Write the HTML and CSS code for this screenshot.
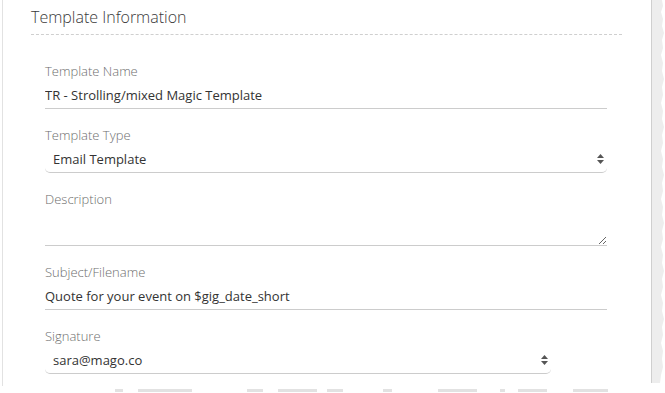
FILE: index.html
```
<!DOCTYPE html>
<html lang="en">
<head>
  <meta charset="UTF-8">
  <title>Template Information</title>
  <link rel="stylesheet" href="styles.css">
</head>
<body>
  <div class="page">
    <div class="panel">
      <h3 class="panel-title">Template Information</h3>

      <form class="fields">
        <div class="form-group">
          <label for="name">Template Name</label>
          <input type="text" id="name" value="TR - Strolling/mixed Magic Template">
        </div>

        <div class="form-group">
          <label for="type">Template Type</label>
          <div class="select-wrap">
            <select id="type">
              <option>Email Template</option>
            </select>
          </div>
        </div>

        <div class="form-group">
          <label for="description">Description</label>
          <textarea id="description"></textarea>
        </div>

        <div class="form-group">
          <label for="subject">Subject/Filename</label>
          <input type="text" id="subject" value="Quote for your event on $gig_date_short">
        </div>

        <div class="form-group">
          <label for="signature">Signature</label>
          <div class="select-wrap short">
            <select id="signature">
              <option>sara@mago.co</option>
            </select>
          </div>
        </div>
      </form>
    </div>

    <div class="edge">
      <svg width="14" height="386" viewBox="0 0 14 386">
        <polygon fill="#ededed" points="0,0 11,0 12,6 10,12 12,19 11,26 13,33 11,40 12,48 10,55 12,63 11,71 13,79 11,87 12,95 10,103 12,111 11,119 13,127 11,135 12,143 10,151 12,159 11,167 13,175 11,183 12,191 10,199 12,207 11,215 13,223 11,231 12,239 10,247 12,255 11,263 13,271 11,279 12,287 10,295 12,303 11,311 13,319 11,327 12,335 10,343 12,351 11,359 12,367 10,375 9,383 0,383"/>
        <line x1="0.5" y1="0" x2="0.5" y2="383" stroke="#cfcfcf" stroke-width="1"/>
      </svg>
    </div>
  </div>

  <div class="next-row">
    <span style="margin-left: 115px; width: 8px"></span>
    <span style="margin-left: 15px; width: 54px"></span>
    <span style="margin-left: 55px; width: 16px"></span>
    <span style="margin-left: 15px; width: 39px"></span>
    <span style="margin-left: 10px; width: 16px"></span>
    <span style="margin-left: 40px; width: 9px"></span>
    <span style="margin-left: 46px; width: 2px"></span>
    <span style="margin-left: 0; width: 37px"></span>
    <span style="margin-left: 23px; width: 5px"></span>
    <span style="margin-left: 13px; width: 29px"></span>
    <span style="margin-left: 26px; width: 35px"></span>
  </div>
</body>
</html>
```

FILE: styles.css
```
body {
  margin: 0;
  padding: 0;
  background: #fff;
  font-family: "Open Sans", Arial, sans-serif;
  color: #333;
}

.page {
  display: flex;
  height: 386px;
  padding-left: 2px;
}

.panel {
  flex: 1;
  border-left: 1px solid #e2e2e2;
  padding: 0 29px 0 28px;
}

.panel-title {
  margin: 0;
  padding: 7px 0 7px;
  font-size: 16px;
  line-height: 20px;
  font-weight: 300;
  color: #3a3a3a;
  border-bottom: 1px dashed #cfcfcf;
}

.fields {
  padding: 26px 15px 0 14px;
}

.form-group {
  margin-bottom: 16px;
}

label {
  display: block;
  font-size: 13px;
  line-height: 20px;
  font-weight: 300;
  color: #6e6e6e;
}

input[type="text"], textarea, select {
  display: block;
  width: 100%;
  box-sizing: border-box;
  border: none;
  border-bottom: 1px solid #cccccc;
  background: transparent;
  font-family: "Open Sans", Arial, sans-serif;
  font-size: 13px;
  color: #333;
  outline: none;
}

input[type="text"] {
  height: 28px;
  line-height: 27px;
  padding: 0;
}

textarea {
  height: 37px;
  padding: 0;
  resize: vertical;
}

.select-wrap {
  position: relative;
}

.select-wrap.short {
  width: 506px;
}

select {
  appearance: none;
  -webkit-appearance: none;
  height: 28px;
  padding: 0 20px 0 8px;
  border-radius: 0 0 5px 5px;
}

/* up/down arrows */
.select-wrap::after {
  content: "";
  position: absolute;
  right: 3px;
  top: 9px;
  width: 7px;
  height: 10px;
  background: url("data:image/svg+xml;utf8,<svg xmlns='http://www.w3.org/2000/svg' width='7' height='10'><polygon points='3.5,0 7,4 0,4' fill='%23555'/><polygon points='0,6 7,6 3.5,10' fill='%23555'/></svg>") no-repeat;
  pointer-events: none;
}

.next-row {
  display: flex;
  height: 7px;
  padding-top: 3px;
}

.next-row span {
  display: block;
  height: 3px;
  background: #e2e2e2;
}
```
